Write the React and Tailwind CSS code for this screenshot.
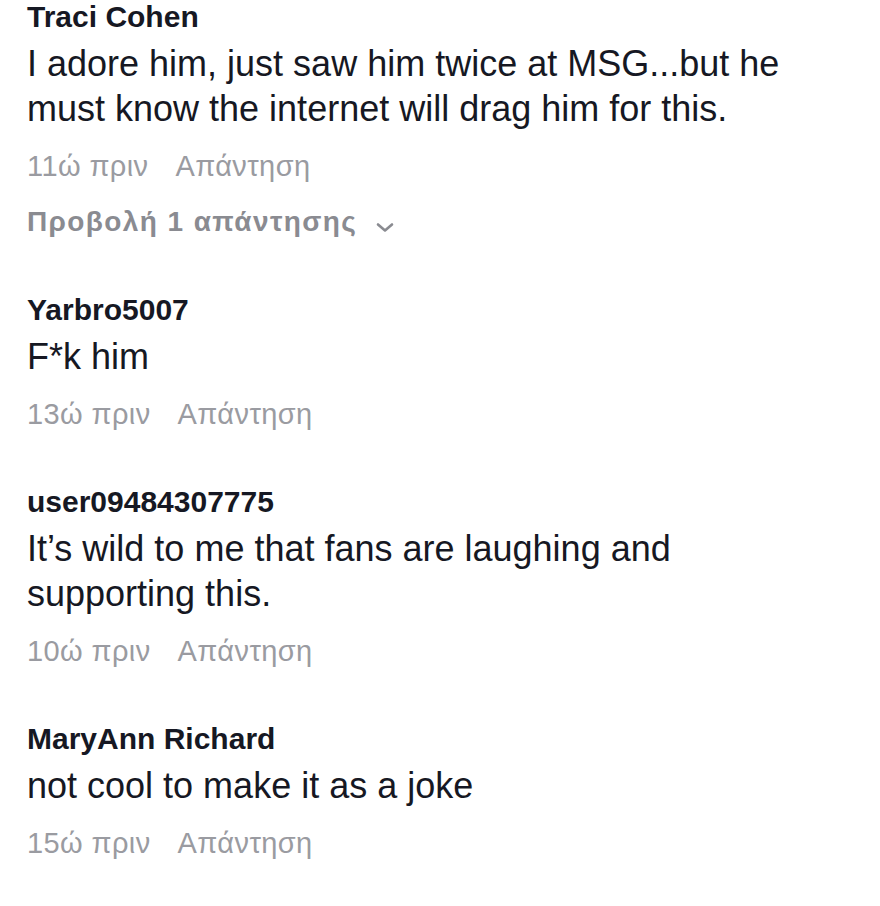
const comments = [
  {
    user: 'Traci Cohen',
    text: 'I adore him, just saw him twice at MSG...but he must know the internet will drag him for this.',
    time: '11ώ πριν',
    replies: 'Προβολή 1 απάντησης',
  },
  { user: 'Yarbro5007', text: 'F*k him', time: '13ώ πριν' },
  { user: 'user09484307775', text: 'It’s wild to me that fans are laughing and supporting this.', time: '10ώ πριν' },
  { user: 'MaryAnn Richard', text: 'not cool to make it as a joke', time: '15ώ πριν' },
];

function Chevron() {
  return (
    <svg width="18" height="12" viewBox="0 0 18 12" fill="none" className="ml-[19px] mt-[10px]">
      <path d="M2 3.5l7 6 7-6" stroke="#8a8b91" strokeWidth="2.6" strokeLinecap="round" strokeLinejoin="round" />
    </svg>
  );
}

function Comment({ c, first }) {
  return (
    <div className={first ? '' : 'mt-[54px]'}>
      <div className="text-[30px] leading-[34px] font-bold text-[#161823]">{c.user}</div>
      <p className="mt-[7px] w-[810px] text-[36px] leading-[45px] text-[#161823]">{c.text}</p>
      <div className="mt-[18px] flex gap-[27px] text-[29px] leading-[34px] tracking-[0.4px] text-[#9a9ba1]">
        <span>{c.time}</span>
        <span>Απάντηση</span>
      </div>
      {c.replies && (
        <div className="mt-[22px] flex items-center text-[28px] leading-[34px] font-bold tracking-[1.4px] text-[#8a8b91]">
          <span>{c.replies}</span>
          <Chevron />
        </div>
      )}
    </div>
  );
}

export default function App() {
  return (
    <div className="w-[880px] h-[906px] bg-white pl-[27px] font-['Liberation_Sans',Arial,sans-serif]">
      {comments.map((c, i) => (
        <Comment key={c.user} c={c} first={i === 0} />
      ))}
    </div>
  );
}
